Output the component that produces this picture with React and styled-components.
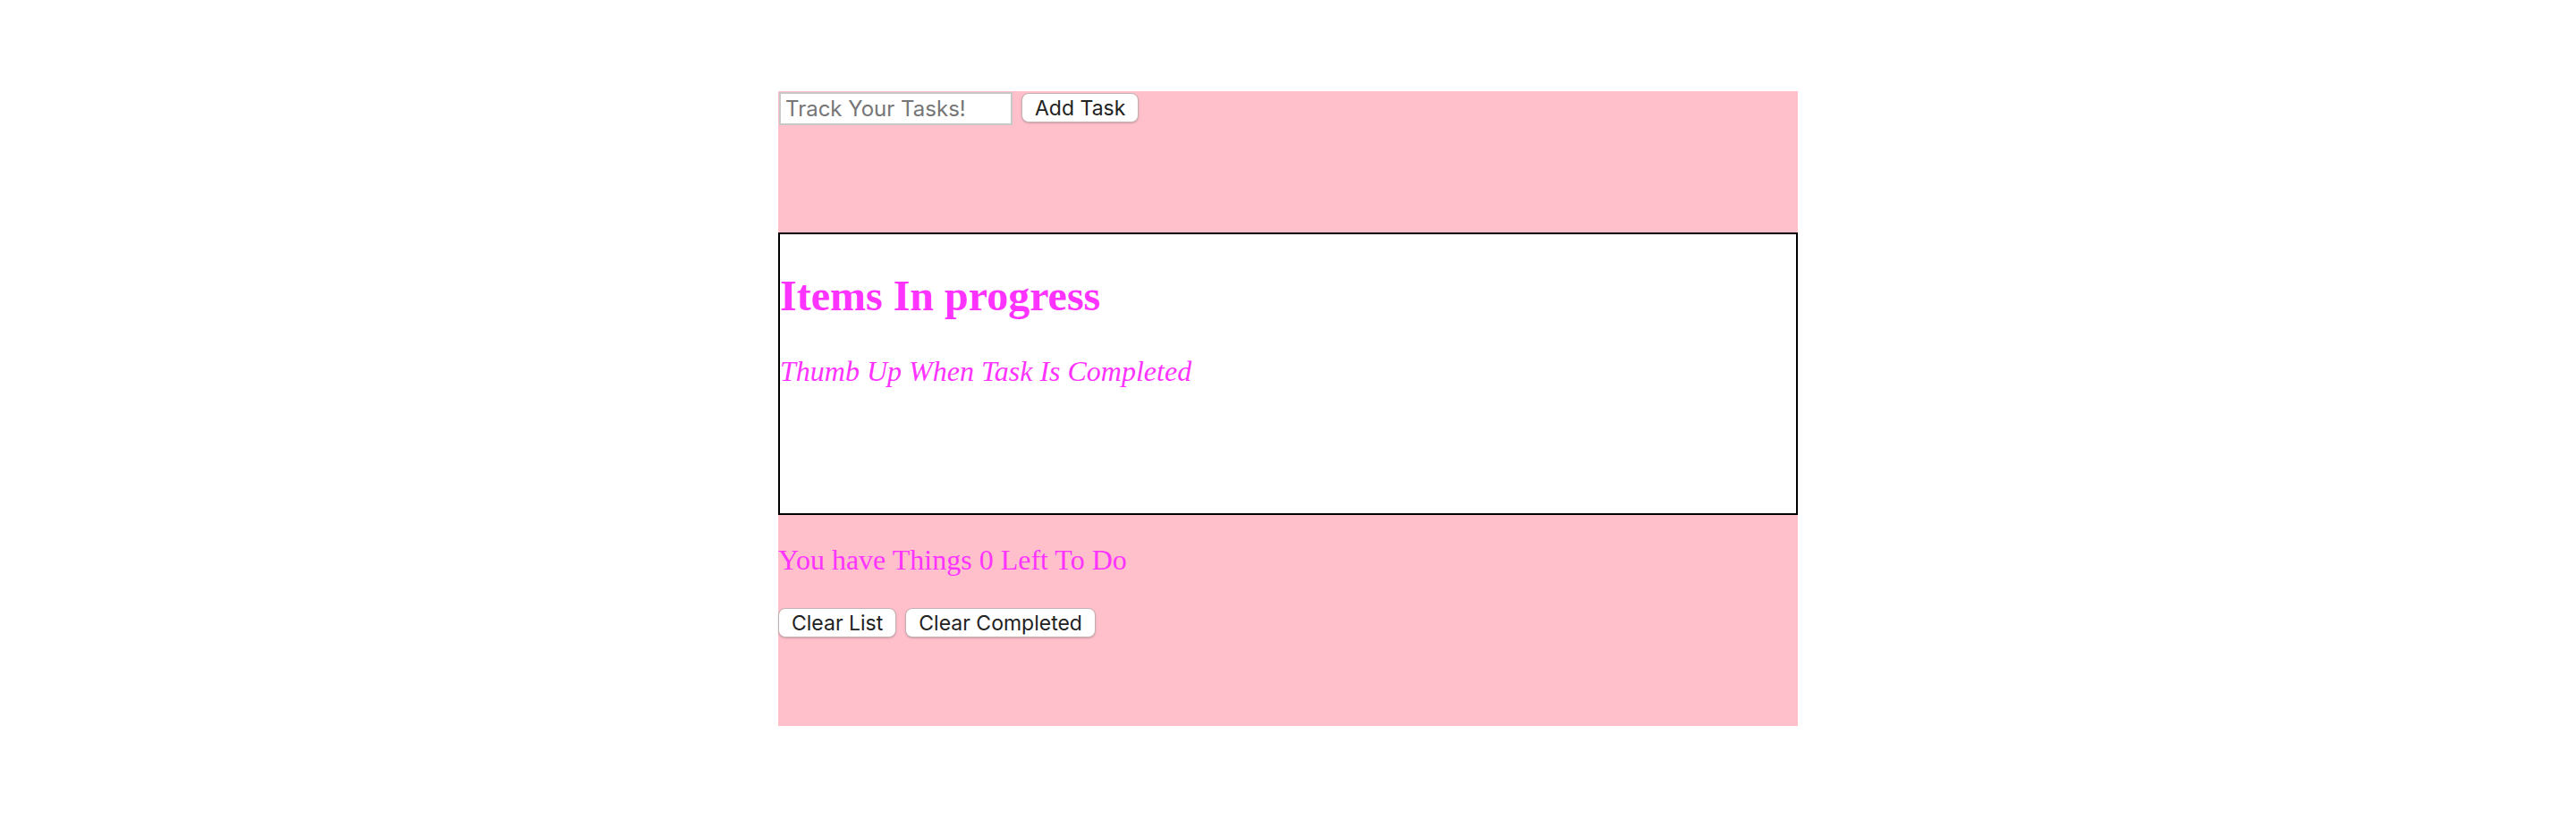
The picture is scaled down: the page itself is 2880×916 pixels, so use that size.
import styled, { createGlobalStyle } from "styled-components";

const GlobalStyle = createGlobalStyle`
  body {
    margin: 0;
    background: #ffffff;
    font-family: "Liberation Serif", "Times New Roman", serif;
  }
`;

const Page = styled.div`
  padding-top: 102px;
  display: flex;
  justify-content: center;
`;

const Board = styled.div`
  width: 1140px;
  height: 710px;
  background-color: pink;
  display: flex;
  flex-direction: column;
`;

const Form = styled.form`
  display: flex;
  align-items: flex-start;
  gap: 10px;
  height: 158px;
`;

const Input = styled.input`
  box-sizing: border-box;
  width: 261px;
  height: 37px;
  margin: 1px 0 0 1px;
  padding: 0 5px;
  border: 2px solid #c8c8c8;
  background: #ffffff;
  font-family: Inter, "Noto Sans", sans-serif;
  font-size: 24px;
  color: #222;
  outline: none;
  &::placeholder {
    color: #767676;
  }
`;

const Button = styled.button`
  box-sizing: border-box;
  height: 33px;
  margin-top: ${(p) => p.$top || 0}px;
  padding: 0 14px;
  background: #ffffff;
  border: 1px solid #c4b0b4;
  border-radius: 8px;
  box-shadow: 0 1px 2px rgba(0, 0, 0, 0.18);
  font-family: Inter, "Noto Sans", sans-serif;
  font-size: 23px;
  color: #222;
  cursor: pointer;
`;

const Progress = styled.section`
  box-sizing: border-box;
  height: 316px;
  background: #ffffff;
  border: 2px solid #000000;
`;

const Heading = styled.h2`
  margin: 42px 0 40px;
  color: #ff33ff;
  font-size: 48px;
  font-weight: bold;
  line-height: 53px;
`;

const Hint = styled.p`
  margin: 0;
  color: #ff33ff;
  font-size: 32px;
  font-style: italic;
  line-height: 36px;
`;

const Count = styled.p`
  margin: 32px 0 36px;
  color: #ff33ff;
  font-size: 32px;
  line-height: 36px;
`;

const Actions = styled.div`
  display: flex;
  gap: 10px;
`;

export default function App() {
  return (
    <>
      <GlobalStyle />
      <Page>
        <Board>
          <Form onSubmit={(e) => e.preventDefault()}>
            <Input placeholder="Track Your Tasks!" />
            <Button $top={2}>Add Task</Button>
          </Form>
          <Progress>
            <Heading>Items In progress</Heading>
            <Hint>Thumb Up When Task Is Completed</Hint>
          </Progress>
          <Count>You have Things 0 Left To Do</Count>
          <Actions>
            <Button>Clear List</Button>
            <Button>Clear Completed</Button>
          </Actions>
        </Board>
      </Page>
    </>
  );
}
